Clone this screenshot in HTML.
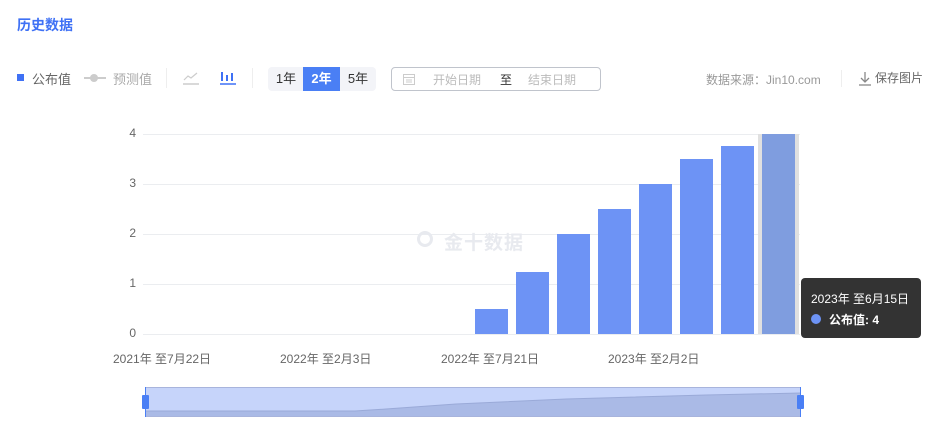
<!DOCTYPE html>
<html><head><meta charset="utf-8"><style>
*{margin:0;padding:0;box-sizing:border-box}
body{width:952px;height:433px;background:#fff;font-family:"Liberation Sans","Noto Sans CJK SC",sans-serif;position:relative;overflow:hidden;font-size:12px}
.a{position:absolute}
.g{position:absolute;left:143px;width:657px;height:1px;background:#ebedf0}
.yl{position:absolute;left:122px;color:#666;font-size:12px;width:14px;text-align:right}
.bar{position:absolute;width:33px;background:#6d93f5;bottom:99px}
.xl{position:absolute;top:350px;color:#666;font-size:12px;white-space:nowrap}
</style></head><body>
<div class="a" style="left:17px;top:15px;color:#3f71f5;font-size:14px;font-weight:bold">历史数据</div>

<div class="a" style="left:17px;top:74px;width:7px;height:7px;background:#3f71f5"></div>
<div class="a" style="left:32px;top:69px;color:#666;font-size:13px">公布值</div>
<div class="a" style="left:84px;top:77px;width:22px;height:2px;background:#ccc"></div>
<div class="a" style="left:90px;top:74px;width:8px;height:8px;border-radius:50%;background:#ccc"></div>
<div class="a" style="left:113px;top:69px;color:#aaa;font-size:13px">预测值</div>
<div class="a" style="left:166px;top:68px;width:1px;height:20px;background:#eee"></div>
<svg class="a" style="left:182px;top:70px" width="18" height="16"><polyline points="2,10 6,6 9,8 15,3" fill="none" stroke="#ccc" stroke-width="1.2"/><line x1="1" y1="14" x2="17" y2="14" stroke="#ccc" stroke-width="1.5"/></svg>
<svg class="a" style="left:219px;top:70px" width="18" height="16"><rect x="2" y="2" width="2" height="9" fill="#3f71f5"/><rect x="7" y="5" width="2" height="6" fill="#3f71f5"/><rect x="12" y="3" width="2" height="8" fill="#3f71f5"/><line x1="1" y1="14" x2="17" y2="14" stroke="#3f71f5" stroke-width="1.5"/></svg>
<div class="a" style="left:252px;top:68px;width:1px;height:20px;background:#eee"></div>
<div class="a" style="left:268px;top:67px;width:108px;height:24px;background:#f3f4f8;border-radius:4px"></div>
<div class="a" style="left:268px;top:67px;width:36px;height:24px;line-height:24px;text-align:center;color:#333;font-size:13px">1年</div>
<div class="a" style="left:303px;top:67px;width:37px;height:24px;line-height:24px;text-align:center;color:#fff;background:#4a7ff5;font-size:13px;font-weight:bold">2年</div>
<div class="a" style="left:340px;top:67px;width:36px;height:24px;line-height:24px;text-align:center;color:#333;font-size:13px">5年</div>
<div class="a" style="left:391px;top:67px;width:210px;height:24px;border:1px solid #c0c4cc;border-radius:4px"></div>
<svg class="a" style="left:402px;top:72px" width="14" height="14"><rect x="1.5" y="2.5" width="11" height="10" fill="none" stroke="#ccc"/><line x1="1.5" y1="5.5" x2="12.5" y2="5.5" stroke="#ccc"/><line x1="4" y1="8" x2="10" y2="8" stroke="#ccc"/><line x1="4" y1="10" x2="10" y2="10" stroke="#ccc"/></svg>
<div class="a" style="left:433px;top:71px;color:#bbb;font-size:12px">开始日期</div>
<div class="a" style="left:500px;top:71px;color:#333;font-size:12px">至</div>
<div class="a" style="left:528px;top:71px;color:#bbb;font-size:12px">结束日期</div>

<div class="a" style="left:706px;top:71px;color:#999;font-size:12px">数据来源：Jin10.com</div>
<div class="a" style="left:841px;top:70px;width:1px;height:17px;background:#eee"></div>
<svg class="a" style="left:858px;top:71px" width="14" height="16"><line x1="7" y1="1" x2="7" y2="11" stroke="#888" stroke-width="1.3"/><polyline points="3,7 7,11 11,7" fill="none" stroke="#888" stroke-width="1.3"/><line x1="1" y1="14" x2="13" y2="14" stroke="#888" stroke-width="1.3"/></svg>
<div class="a" style="left:875px;top:69px;color:#666;font-size:12px">保存图片</div>

<div class="g" style="top:134px"></div><div class="g" style="top:184px"></div><div class="g" style="top:234px"></div><div class="g" style="top:284px"></div><div class="g" style="top:334px"></div>
<div class="yl" style="top:126px">4</div><div class="yl" style="top:176px">3</div><div class="yl" style="top:226px">2</div><div class="yl" style="top:276px">1</div><div class="yl" style="top:326px">0</div>

<div class="a" style="left:417px;top:231px;width:16px;height:16px;border:3px solid #e8eaef;border-radius:50%"></div>
<div class="a" style="left:444px;top:228px;color:#e8eaef;font-size:19px;font-weight:bold;letter-spacing:1px">金十数据</div>

<div class="a" style="left:758px;top:134px;width:41px;height:200px;background:#e0e0e0"></div>
<div class="bar" style="left:475px;height:25px"></div>
<div class="bar" style="left:516px;height:62px"></div>
<div class="bar" style="left:557px;height:100px"></div>
<div class="bar" style="left:598px;height:125px"></div>
<div class="bar" style="left:639px;height:150px"></div>
<div class="bar" style="left:680px;height:175px"></div>
<div class="bar" style="left:721px;height:188px"></div>
<div class="bar" style="left:762px;height:200px;background:#7f9ddf"></div>

<div class="xl" style="left:113px">2021年 至7月22日</div>
<div class="xl" style="left:280px">2022年 至2月3日</div>
<div class="xl" style="left:441px">2022年 至7月21日</div>
<div class="xl" style="left:608px">2023年 至2月2日</div>

<div class="a" style="left:801px;top:278px;width:120px;height:60px;background:#333;border-radius:4px"></div>
<div class="a" style="left:811px;top:290px;color:#fff;font-size:12px">2023年 至6月15日</div>
<div class="a" style="left:811px;top:314px;width:10px;height:10px;border-radius:50%;background:#6d93f5"></div>
<div class="a" style="left:829px;top:311px;color:#fff;font-size:12px;font-weight:bold">公布值: 4</div>

<div class="a" style="left:146px;top:387px;width:655px;height:30px;background:#c6d4fa;border-top:1px solid #a8b4dc;border-bottom:1px solid #a8b4dc"></div>
<svg class="a" style="left:146px;top:388px" width="655" height="28"><path d="M0,23 L209,23 L240,21 L310,16 L420,11 L560,7 L655,5 L655,28 L0,28Z" fill="#aabae6"/><path d="M0,23 L209,23 L240,21 L310,16 L420,11 L560,7 L655,5" fill="none" stroke="#9aaad8"/></svg>
<div class="a" style="left:145px;top:387px;width:1px;height:30px;background:#4a7ff5"></div>
<div class="a" style="left:800px;top:387px;width:1px;height:30px;background:#4a7ff5"></div>
<div class="a" style="left:142px;top:395px;width:7px;height:14px;background:#4a7ff5;border-radius:1px"></div>
<div class="a" style="left:797px;top:395px;width:7px;height:14px;background:#4a7ff5;border-radius:1px"></div>
</body></html>
